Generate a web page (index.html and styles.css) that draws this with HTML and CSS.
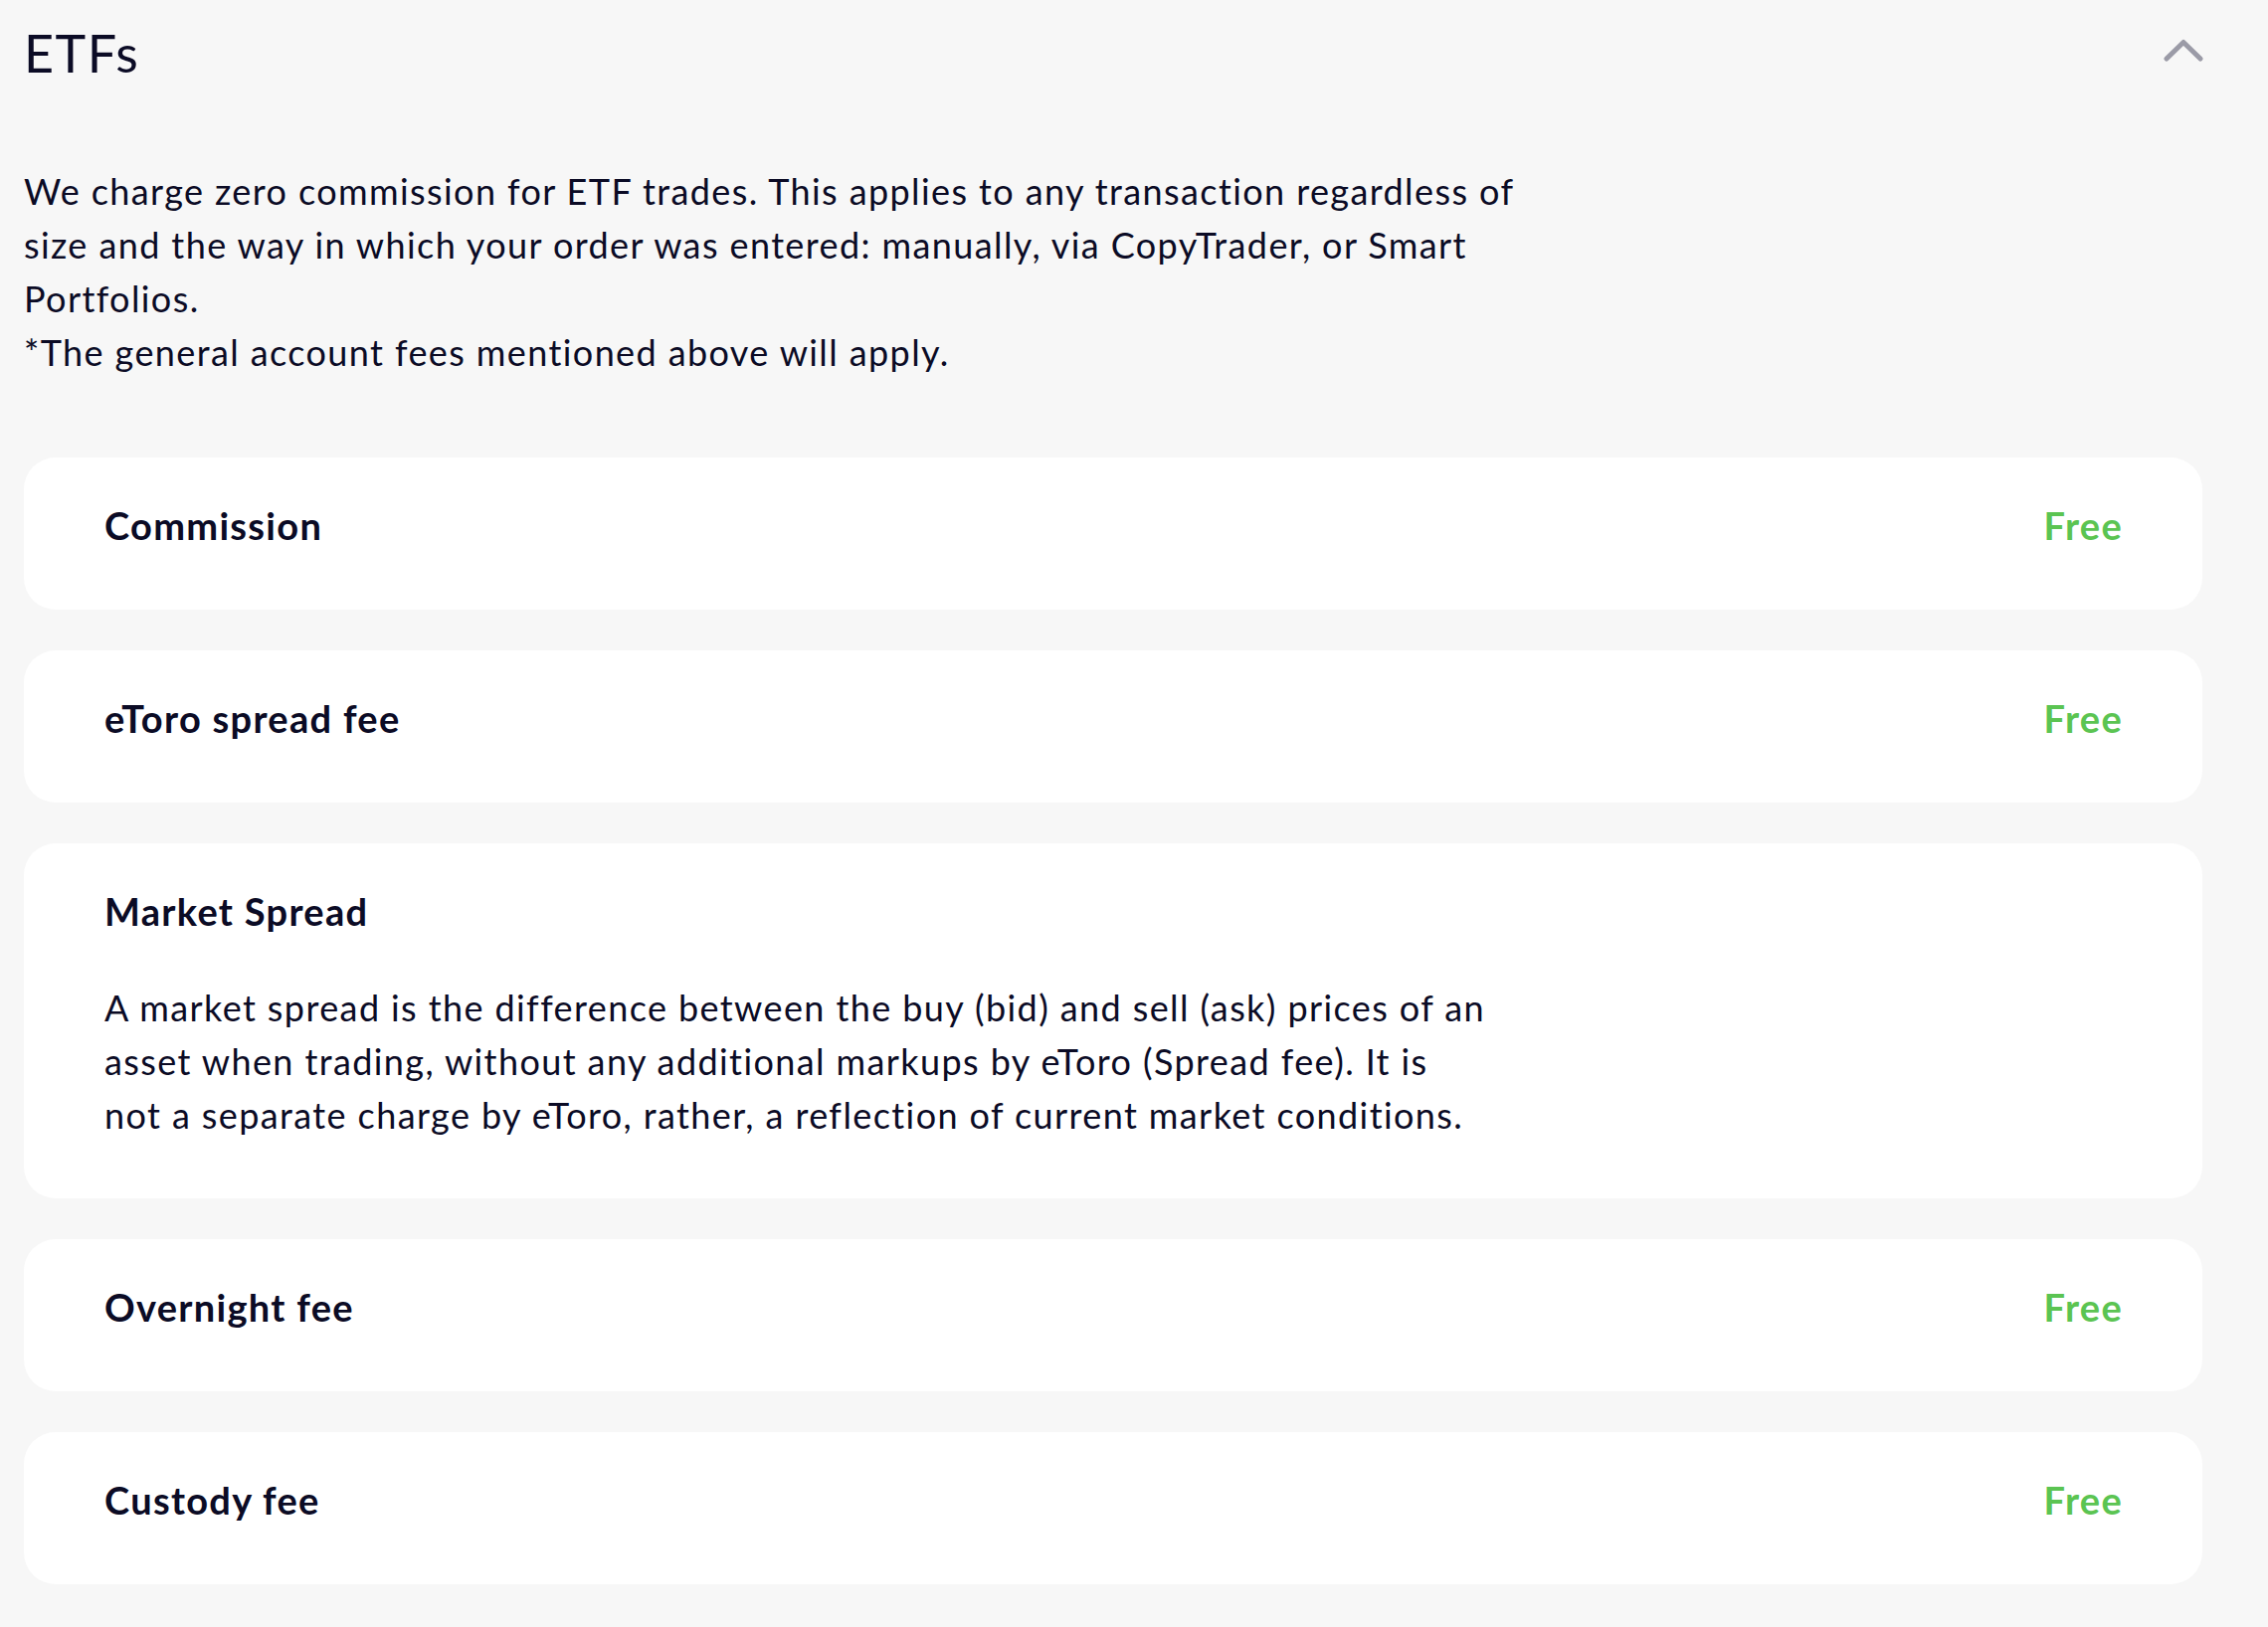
FILE: index.html
```html
<!DOCTYPE html>
<html lang="en">

<head>
  <meta charset="UTF-8">
  <meta name="viewport" content="width=device-width, initial-scale=1.0">
  <title>ETFs</title>
  <link rel="stylesheet" href="styles.css">
</head>

<body>

  <div id="fees">
    <div class="fees-head">
      <h2>ETFs</h2>
      <span class="toggle">
        <svg width="40" height="24" viewBox="0 0 40 24">
          <polyline points="3,21 20,4.5 37,21" fill="none" stroke="#9b9ba7" stroke-width="5" stroke-linecap="round" stroke-linejoin="round" />
        </svg>
      </span>
    </div>

    <p class="intro">We charge zero commission for ETF trades. This applies to any transaction regardless of size and the way in which your order was entered: manually, via CopyTrader, or Smart Portfolios.<br>*The general account fees mentioned above will apply.</p>

    <ul class="fee-list">
      <li class="fee">
        <span class="fee-name">Commission</span>
        <span class="fee-value">Free</span>
      </li>
      <li class="fee">
        <span class="fee-name">eToro spread fee</span>
        <span class="fee-value">Free</span>
      </li>
      <li class="fee fee-text">
        <span class="fee-name">Market Spread</span>
        <p>A market spread is the difference between the buy (bid) and sell (ask) prices of an asset when trading, without any additional markups by eToro (Spread fee). It is not a separate charge by eToro, rather, a reflection of current market conditions.</p>
      </li>
      <li class="fee">
        <span class="fee-name">Overnight fee</span>
        <span class="fee-value">Free</span>
      </li>
      <li class="fee">
        <span class="fee-name">Custody fee</span>
        <span class="fee-value">Free</span>
      </li>
    </ul>
  </div>

</body>

</html>
```

FILE: styles.css
```css
* {
  margin: 0;
  padding: 0;
  box-sizing: border-box;
}

li {
  list-style: none;
}

body {
  background: #f7f7f7;
  color: #0b0b25;
  font-family: Lato, "Open Sans", sans-serif;
}

#fees {
  padding: 22px 66px 40px 24px;
}

.fees-head {
  display: flex;
  justify-content: space-between;
  align-items: center;
}

.fees-head h2 {
  font-size: 52px;
  font-weight: 400;
  line-height: 62px;
  letter-spacing: 1.5px;
}

.toggle {
  display: flex;
  margin-right: -1px;
  margin-top: -7px;
}

.intro {
  font-size: 36px;
  line-height: 54px;
  letter-spacing: 1.4px;
  max-width: 1560px;
  margin-top: 81px;
}

.fee-list {
  margin-top: 79px;
  display: flex;
  flex-direction: column;
  gap: 41px;
}

.fee {
  background: #ffffff;
  border-radius: 32px;
  min-height: 153px;
  padding: 45px 80px 0 81px;
  display: flex;
  justify-content: space-between;
  align-items: flex-start;
}

.fee-name {
  font-size: 38px;
  font-weight: 700;
  letter-spacing: 1.3px;
}

.fee-value {
  font-size: 38px;
  font-weight: 700;
  letter-spacing: 1.3px;
  color: #5bc452;
}

.fee-text {
  display: block;
  padding-bottom: 57px;
}

.fee-text .fee-name {
  display: block;
}

.fee-text p {
  font-size: 36px;
  line-height: 54px;
  letter-spacing: 1.4px;
  max-width: 1396px;
  margin-top: 47px;
}
```
